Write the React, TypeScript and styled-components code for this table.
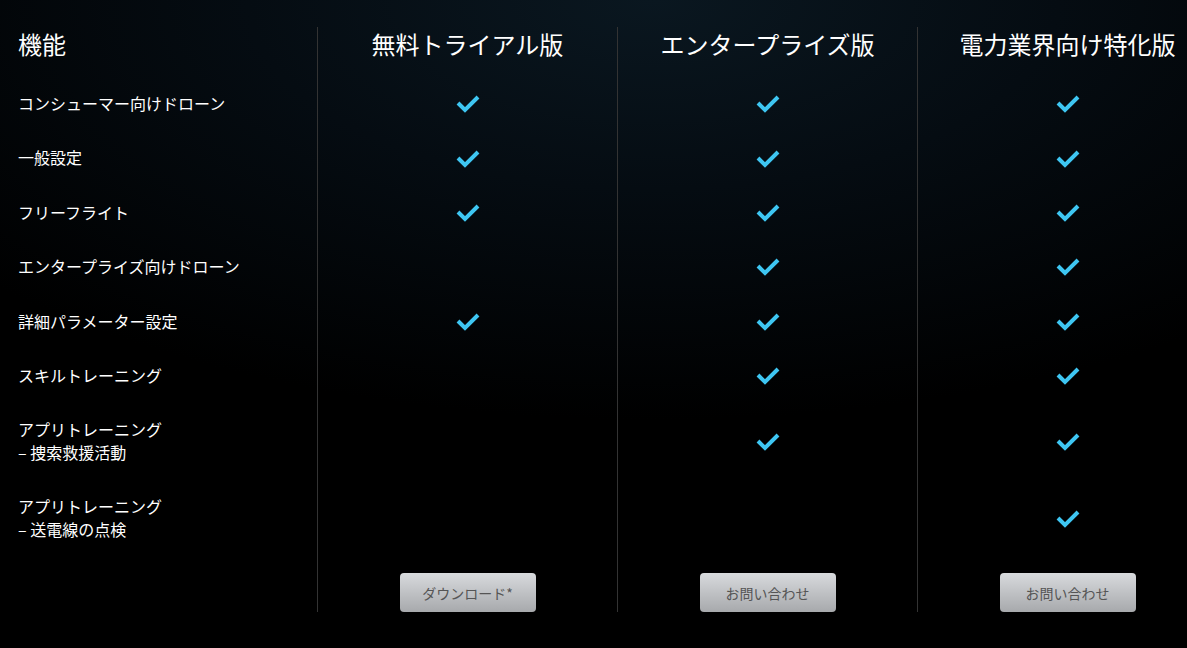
import * as React from 'react'
import styled, { createGlobalStyle } from 'styled-components'

const GlobalStyle = createGlobalStyle`
  html, body {
    margin: 0;
    padding: 0;
    background: #000;
  }
  body {
    font-family: "Noto Sans CJK JP", "Noto Sans", sans-serif;
    color: #fff;
  }
`

const Page = styled.div`
  width: 1187px;
  height: 648px;
  overflow: hidden;
  background: radial-gradient(ellipse 900px 420px at 55% 0%, #0a1720 0%, #050c12 45%, #000 100%);
  padding-top: 27px;
  box-sizing: border-box;
`

const Table = styled.div`
  display: grid;
  grid-template-columns: 317px 300px 300px 300px;
  width: 1217px;
`

const HeadCell = styled.div<{ $first?: boolean }>`
  font-size: 24px;
  line-height: 34px;
  padding: 0 0 15px ${p => (p.$first ? '18px' : '0')};
  text-align: ${p => (p.$first ? 'left' : 'center')};
  border-left: ${p => (p.$first ? 'none' : '1px solid #333')};
  white-space: nowrap;
`

const Label = styled.div`
  font-size: 16px;
  line-height: 22.4px;
  padding: 16px 18px;
`

const Cell = styled.div`
  display: flex;
  align-items: center;
  justify-content: center;
  border-left: 1px solid #333;
`

const FootCell = styled.div<{ $first?: boolean }>`
  display: flex;
  justify-content: center;
  padding-top: 17px;
  border-left: ${p => (p.$first ? 'none' : '1px solid #333')};
`

const Button = styled.button`
  width: 136px;
  height: 39px;
  border: none;
  border-radius: 4px;
  background: linear-gradient(180deg, #d8dadd 0%, #a7a9ac 100%);
  color: #555;
  font-family: "Noto Sans CJK JP", sans-serif;
  font-size: 14px;
  cursor: pointer;
`

const Check = () => (
  <svg width="26" height="20" viewBox="0 0 26 20">
    <polyline points="3,10 10,17 23,4" fill="none" stroke="#3ec6f2" strokeWidth="4" strokeLinejoin="miter" />
  </svg>
)

const plans = ['無料トライアル版', 'エンタープライズ版', '電力業界向け特化版']

const rows: { label: string[]; marks: boolean[] }[] = [
  { label: ['コンシューマー向けドローン'], marks: [true, true, true] },
  { label: ['一般設定'], marks: [true, true, true] },
  { label: ['フリーフライト'], marks: [true, true, true] },
  { label: ['エンタープライズ向けドローン'], marks: [false, true, true] },
  { label: ['詳細パラメーター設定'], marks: [true, true, true] },
  { label: ['スキルトレーニング'], marks: [false, true, true] },
  { label: ['アプリトレーニング', '– 捜索救援活動'], marks: [false, true, true] },
  { label: ['アプリトレーニング', '– 送電線の点検'], marks: [false, false, true] },
]

const buttons = ['ダウンロード*', 'お問い合わせ', 'お問い合わせ']

export default function App() {
  return (
    <>
      <GlobalStyle />
      <Page>
        <Table>
          <HeadCell $first>機能</HeadCell>
          {plans.map(p => (
            <HeadCell key={p}>{p}</HeadCell>
          ))}
          {rows.map((r, i) => (
            <React.Fragment key={i}>
              <Label>
                {r.label.map((l, j) => (
                  <div key={j}>{l}</div>
                ))}
              </Label>
              {r.marks.map((m, j) => (
                <Cell key={j}>{m && <Check />}</Cell>
              ))}
            </React.Fragment>
          ))}
          <FootCell $first />
          {buttons.map((b, i) => (
            <FootCell key={i}>
              <Button>{b}</Button>
            </FootCell>
          ))}
        </Table>
      </Page>
    </>
  )
}
